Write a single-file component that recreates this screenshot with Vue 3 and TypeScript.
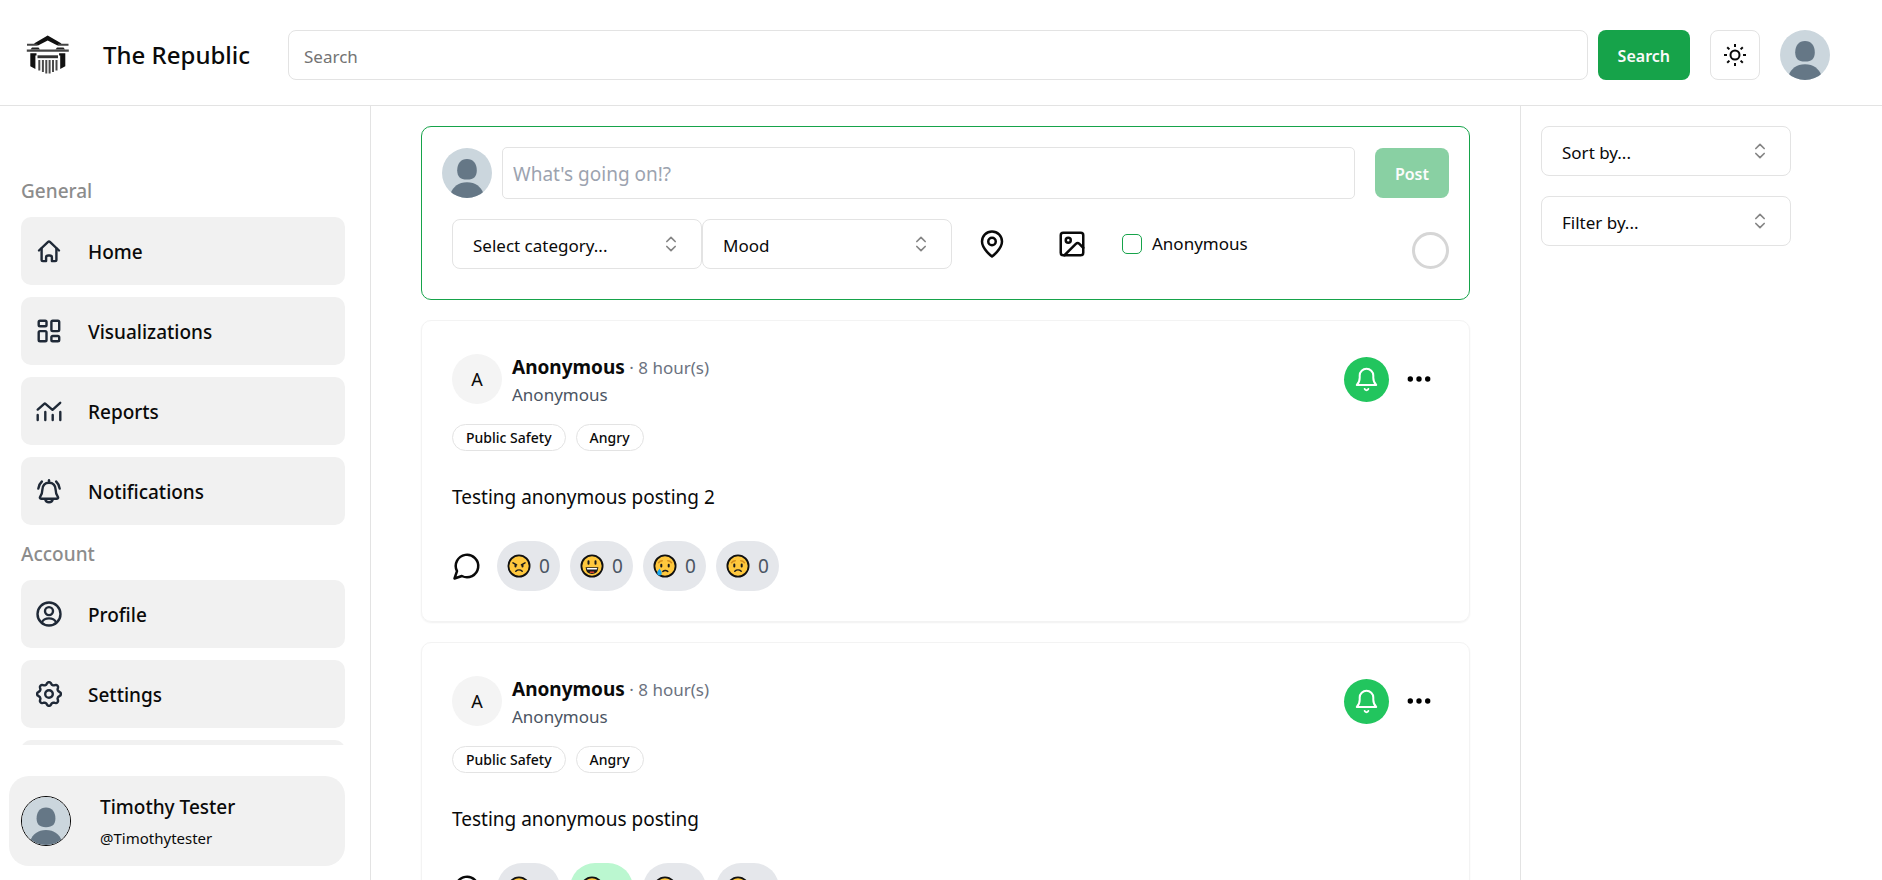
<script setup lang="ts">
import { ref, h } from 'vue'

interface NavItem {
  label: string
  icon: string[]
}

interface Reaction {
  name: string
  count: number
  active?: boolean
}

interface Post {
  id: number
  author: string
  handle: string
  age: string
  tags: string[]
  body: string
  reactions: Reaction[]
}

/** Builds the scalloped outline of the cog, centred in a 30-unit box. */
function cogOutline(): string {
  const points: string[] = []
  for (let i = 0; i < 96; i++) {
    const a = (i / 96) * Math.PI * 2
    const wave = Math.max(-0.75, Math.min(0.75, Math.cos(8 * a)))
    const r = 10.7 + wave * 1.5
    points.push(`${(15 + r * Math.sin(a)).toFixed(2)} ${(15 - r * Math.cos(a)).toFixed(2)}`)
  }
  return `M${points.join('L')}Z`
}

const general: NavItem[] = [
  {
    label: 'Home',
    icon: [
      'M5 14.5 14.1 5.9a1.3 1.3 0 0 1 1.8 0L25 14.5',
      'M7.6 12.5v11.3c0 .8.5 1.3 1.3 1.3h3.2v-3.6c0-1.2.8-2 2-2h1.8c1.2 0 2 .8 2 2v3.6h3.2c.8 0 1.3-.5 1.3-1.3V12.5',
    ],
  },
  {
    label: 'Visualizations',
    icon: [
      'M6 4.7h5.2a1.3 1.3 0 0 1 1.3 1.3v2.9a1.3 1.3 0 0 1-1.3 1.3H6a1.3 1.3 0 0 1-1.3-1.3V6A1.3 1.3 0 0 1 6 4.7z',
      'M18.7 4.7h5.2a1.3 1.3 0 0 1 1.3 1.3v7.8a1.3 1.3 0 0 1-1.3 1.3h-5.2a1.3 1.3 0 0 1-1.3-1.3V6a1.3 1.3 0 0 1 1.3-1.3z',
      'M6 15.1h5.2a1.3 1.3 0 0 1 1.3 1.3V24a1.3 1.3 0 0 1-1.3 1.3H6A1.3 1.3 0 0 1 4.7 24v-7.6A1.3 1.3 0 0 1 6 15.1z',
      'M18.7 20h5.2a1.3 1.3 0 0 1 1.3 1.3V24a1.3 1.3 0 0 1-1.3 1.3h-5.2a1.3 1.3 0 0 1-1.3-1.3v-2.7a1.3 1.3 0 0 1 1.3-1.3z',
    ],
  },
  {
    label: 'Reports',
    icon: [
      'M3.7 13.6 10.2 7.8a1 1 0 0 1 1.3 0L18.5 13.8 26.2 6.8',
      'M3.7 19v5M11.3 16v8M18.7 19v5M26.3 16v8',
    ],
  },
  {
    label: 'Notifications',
    icon: [
      'M15 4.3v2.4',
      'M15 6.7c-4.2 0-6.5 3-6.6 6.8-.1 3.7-.7 5.3-2.2 7.2-.7 1-.3 2 .9 2h15.8c1.2 0 1.6-1 .9-2-1.5-1.9-2.1-3.5-2.2-7.2-.1-3.8-2.4-6.8-6.6-6.8z',
      'M11.2 23.2c.4 2 1.8 3.1 3.8 3.1s3.4-1.1 3.8-3.1',
      'M7.9 5.5C5.9 7.3 4.7 9.6 4.3 12.6M22.1 5.5c2 1.8 3.2 4.1 3.6 7.1',
    ],
  },
]

const account: NavItem[] = [
  {
    label: 'Profile',
    icon: [
      'M3.5 15a11.5 11.5 0 1 0 23 0a11.5 11.5 0 1 0-23 0z',
      'M11 12.1a4 4 0 1 0 8 0a4 4 0 1 0-8 0z',
      'M7.8 23.4c1.4-3 3.9-4 7.2-4s5.8 1 7.2 4',
    ],
  },
  {
    label: 'Settings',
    icon: [cogOutline(), 'M11.2 15a3.8 3.8 0 1 0 7.6 0a3.8 3.8 0 1 0-7.6 0z'],
  },
  {
    label: 'Logout',
    icon: ['M12 5H7a2 2 0 0 0-2 2v16a2 2 0 0 0 2 2h5', 'M19 20l6-5-6-5M25 15H12'],
  },
]

const navGroups = [
  { title: 'General', items: general },
  { title: 'Account', items: account },
]

const makeReactions = (active?: string): Reaction[] =>
  ['angry', 'happy', 'sad', 'worried'].map((name) => ({
    name,
    count: name === active ? 1 : 0,
    active: name === active,
  }))

const posts = ref<Post[]>([
  {
    id: 2,
    author: 'Anonymous',
    handle: 'Anonymous',
    age: '8 hour(s)',
    tags: ['Public Safety', 'Angry'],
    body: 'Testing anonymous posting 2',
    reactions: makeReactions(),
  },
  {
    id: 1,
    author: 'Anonymous',
    handle: 'Anonymous',
    age: '8 hour(s)',
    tags: ['Public Safety', 'Angry'],
    body: 'Testing anonymous posting',
    reactions: makeReactions('happy'),
  },
])

const query = ref('')
const draft = ref('')
const anonymous = ref(false)

const AvatarArt = () =>
  h('svg', { viewBox: '0 0 50 50', 'aria-hidden': 'true' }, [
    h('rect', { width: 50, height: 50, fill: '#cbd6dd' }),
    h('path', {
      d: 'M25 11c6.2 0 9.8 4.8 9.8 11.2 0 6-2.6 9.3-9.8 9.3s-9.8-3.3-9.8-9.3C15.2 15.8 18.8 11 25 11z',
      fill: '#657786',
    }),
    h('path', { d: 'M25 34.3c8.5 0 13.8 4.5 16.5 11.2V50h-33v-4.5C11.2 38.8 16.5 34.3 25 34.3z', fill: '#657786' }),
  ])

const UpDown = () =>
  h(
    'svg',
    {
      viewBox: '0 0 24 24',
      fill: 'none',
      stroke: '#858585',
      'stroke-width': 2,
      'stroke-linecap': 'round',
      'stroke-linejoin': 'round',
      'aria-hidden': 'true',
    },
    [h('path', { d: 'm7 15 5 5 5-5M7 9l5-5 5 5' })],
  )
</script>

<template>
  <div class="shell">
    <header class="topbar">
      <a class="brand" href="#">
        <svg class="logo" viewBox="0 0 44 42" aria-hidden="true">
          <path d="M21.7 1.5 35.5 9.5 31.5 11.5 21.7 6.5 12 11.5 8 9.5z" fill="#111" />
          <path d="M1 9.8h10.5v2H1zM32 9.8h10.5v2H32z" fill="#444" />
          <path d="M6 13.6h6.5l1.5 2H4.5zM31 13.6h6.5l1.5 2h-9.500z" fill="#222" />
          <path d="M.8 15.6h42v2.2H.8z" fill="#444" />
          <path d="M4.3 19.3h6.2v2.2H9.4V35l-5.1-2.7zM39.3 19.3h-6.2v2.2h1.1V35l5.1-2.7z" fill="#111" />
          <path d="M11.5 21.3h20.5v2.9H11.5z" fill="#333" />
          <path d="M13.3 26v10.500M16.900 26v12M20.300 26v13.500M23.600 26v13.500M27 26v12M30.500 26v10.500" stroke="#4a4a4a" stroke-width="2" />
        </svg>
        <span class="brand-name">The Republic</span>
      </a>
      <form class="search" role="search" @submit.prevent>
        <input v-model="query" class="search-input" type="search" placeholder="Search" aria-label="Search" />
        <button class="btn-primary" type="submit">Search</button>
      </form>
      <button class="theme" type="button" aria-label="Toggle theme">
        <svg viewBox="0 0 24 24" aria-hidden="true">
          <circle cx="12" cy="12" r="4.5" />
          <path d="M12 1v3M12 20v3M4.2 4.2l2.2 2.2M17.600 17.600l2.200 2.200M1 12h3M20 12h3M6.400 17.600l-2.200 2.200M19.800 4.200l-2.200 2.200" />
        </svg>
      </button>
      <button class="avatar" type="button" aria-label="Account menu"><AvatarArt /></button>
    </header>

    <div class="columns">
      <aside class="sidebar">
        <nav class="nav">
          <section v-for="group in navGroups" :key="group.title" class="nav-group">
            <h2 class="nav-title">{{ group.title }}</h2>
            <a v-for="item in group.items" :key="item.label" class="nav-item" href="#">
              <svg class="nav-icon" viewBox="0 0 30 30" aria-hidden="true">
                <path v-for="d in item.icon" :key="d" :d="d" />
              </svg>
              <span>{{ item.label }}</span>
            </a>
          </section>
        </nav>
        <a class="user" href="#">
          <span class="avatar ringed"><AvatarArt /></span>
          <span class="user-text">
            <span class="user-name">Timothy Tester</span>
            <span class="user-handle">@Timothytester</span>
          </span>
        </a>
      </aside>

      <main class="feed">
        <form class="composer" @submit.prevent>
          <div class="composer-row">
            <span class="avatar"><AvatarArt /></span>
            <input v-model="draft" class="draft" type="text" placeholder="What's going on!?" aria-label="Post text" />
            <button class="btn-primary" type="submit" :disabled="!draft">Post</button>
          </div>
          <div class="composer-tools">
            <label class="picker">
              <select aria-label="Category"><option>Select category...</option></select>
              <UpDown class="picker-icon" />
            </label>
            <label class="picker">
              <select aria-label="Mood"><option>Mood</option></select>
              <UpDown class="picker-icon" />
            </label>
            <button class="tool" type="button" aria-label="Add location">
              <svg viewBox="0 0 24 24" aria-hidden="true">
                <path d="M20 10c0 6-8 12-8 12s-8-6-8-12a8 8 0 0 1 16 0Z" />
                <circle cx="12" cy="10" r="3" />
              </svg>
            </button>
            <button class="tool" type="button" aria-label="Add image">
              <svg viewBox="0 0 24 24" aria-hidden="true">
                <rect width="18" height="18" x="3" y="3" rx="2" />
                <circle cx="9" cy="9" r="2" />
                <path d="m21 15-3.086-3.086a2 2 0 0 0-2.828 0L6 21" />
              </svg>
            </button>
            <label class="check">
              <input v-model="anonymous" type="checkbox" />
              <span>Anonymous</span>
            </label>
            <span class="gauge" role="progressbar" aria-label="Characters used" aria-valuenow="0"></span>
          </div>
        </form>

        <article v-for="post in posts" :key="post.id" class="post">
          <div class="post-head">
            <span class="initial">A</span>
            <div class="byline">
              <div><strong class="author">{{ post.author }}</strong><span class="age"> · {{ post.age }}</span></div>
              <div class="handle">{{ post.handle }}</div>
            </div>
            <button class="follow" type="button" aria-label="Follow post">
              <svg viewBox="0 0 45 45" aria-hidden="true">
                <path d="M12.8 28h19.4c-1.9-2-2.9-3.7-2.9-7.2v-2.3a6.8 6.8 0 0 0-13.6 0v2.3c0 3.5-1 5.2-2.9 7.2z" />
                <path d="M20.7 32a1.9 1.7 0 0 0 3.6 0" />
              </svg>
            </button>
            <button class="more" type="button" aria-label="More options">
              <svg viewBox="0 0 30 30" aria-hidden="true">
                <circle cx="6.3" cy="15" r="2.7" /><circle cx="15" cy="15" r="2.7" /><circle cx="23.7" cy="15" r="2.7" />
              </svg>
            </button>
          </div>
          <div class="tags">
            <span v-for="tag in post.tags" :key="tag" class="tag">{{ tag }}</span>
          </div>
          <p class="body">{{ post.body }}</p>
          <div class="reactions">
            <button class="comment" type="button" aria-label="Comment">
              <svg viewBox="0 0 24 24" aria-hidden="true"><path d="M7.9 20A9 9 0 1 0 4 16.1L2 22Z" /></svg>
            </button>
            <button
              v-for="r in post.reactions"
              :key="r.name"
              class="reaction"
              :class="{ active: r.active }"
              type="button"
              :aria-label="r.name"
            >
              <svg class="face" viewBox="0 0 24 24" aria-hidden="true">
                <circle cx="12" cy="12" r="10.6" fill="#ffc83d" stroke="#111" stroke-width="1.8" />
                <g v-if="r.name === 'angry'" class="ink">
                  <path d="M6 8.8l3.6 2M18 8.8l-3.6 2M8.8 17.3c1.8-1.7 4.6-1.7 6.4 0" />
                  <path d="M8.5 11.2v1.2M15.5 11.2v1.2" class="eye" />
                </g>
                <g v-else-if="r.name === 'happy'" class="ink">
                  <path d="M8.5 7.2v2.5M15.5 7.2v2.5" class="eye" />
                  <path d="M6.5 14h11c-.3 3.2-2.5 5.2-5.5 5.2s-5.200-2-5.500-5.200z" fill="#1a1a1a" />
                  <path d="M7.5 14.8h9" class="teeth" />
                  <path d="M10.4 18.2h3.2" class="tongue" />
                </g>
                <g v-else-if="r.name === 'sad'" class="ink">
                  <path d="M5.5 8.7c1-1.3 2.2-2 3.7-2M18.5 8.7c-1-1.3-2.2-2-3.7-2" class="brow" />
                  <path d="M8.3 10.8v1.6M15.7 10.8v1.6" class="eye" />
                  <path d="M9.8 17.5c1.4-1.5 3.6-1.5 5 0" />
                  <path d="M6.5 14.5c1.5 2 2.3 3.4 2.3 4.7a2.3 2.3 0 0 1-4.6 0c0-1.3.8-2.7 2.3-4.7z" class="tear" />
                </g>
                <g v-else class="ink">
                  <path d="M5.5 8.7c1-1.3 2.2-2 3.7-2M18.5 8.7c-1-1.3-2.2-2-3.7-2" class="brow" />
                  <path d="M8.3 10.5v1.9M15.7 10.5v1.9" class="eye" />
                  <path d="M8.8 17.3c1.8-1.7 4.6-1.7 6.4 0" />
                </g>
              </svg>
              <span>{{ r.count }}</span>
            </button>
          </div>
        </article>
      </main>

      <aside class="filters">
        <label class="picker">
          <select aria-label="Sort posts"><option>Sort by...</option></select>
          <UpDown class="picker-icon" />
        </label>
        <label class="picker">
          <select aria-label="Filter posts"><option>Filter by...</option></select>
          <UpDown class="picker-icon" />
        </label>
      </aside>
    </div>
  </div>
</template>

<style>
body {
  margin: 0;
  background: #fff;
}
</style>

<style scoped>
.shell {
  display: flex;
  flex-direction: column;
  height: 100vh;
  color: #0a0a0a;
  font-family: 'Noto Sans', 'Open Sans', sans-serif;
  font-size: 18px;
  line-height: 28px;
  font-weight: 380;
}
.shell *,
.shell *::before {
  box-sizing: border-box;
}
button,
input,
select {
  margin: 0;
  padding: 0;
  font: inherit;
  color: inherit;
}
button {
  border: 0;
  background: none;
  cursor: pointer;
}
a {
  color: inherit;
  text-decoration: none;
}
svg {
  display: block;
}

/* Header */
.topbar {
  display: flex;
  flex: none;
  align-items: center;
  height: 106px;
  padding: 20px 52px 15px 26px;
  border-bottom: 1px solid #e3e3e3;
}
.brand {
  display: flex;
  align-items: center;
  gap: 33px;
  width: 262px;
}
.logo {
  width: 44px;
  height: 42px;
}
.brand-name {
  font-size: 24px;
  line-height: 32px;
  font-weight: 480;
  white-space: nowrap;
}
.search {
  display: flex;
  flex: 1;
  gap: 10px;
}
.search-input {
  flex: 1;
  min-width: 0;
  height: 50px;
  padding: 2px 15px 0;
  border: 1px solid #e3e3e3;
  border-radius: 8px;
  background: #fff;
  font-size: 17px;
  outline: none;
  appearance: none;
}
.search-input::placeholder {
  color: #737373;
  opacity: 1;
}
.btn-primary {
  height: 50px;
  padding: 2px 20px 0;
  border-radius: 8px;
  background: #16a34a;
  color: #fafafa;
  font-size: 16px;
  font-weight: 600;
}
.btn-primary:disabled {
  opacity: 0.5;
}
.theme {
  display: grid;
  place-items: center;
  width: 50px;
  height: 50px;
  margin: 0 20px;
  border: 1px solid #e3e3e3;
  border-radius: 8px;
}
.theme svg {
  width: 24px;
  height: 24px;
  fill: none;
  stroke: #0a0a0a;
  stroke-width: 2;
}
.avatar {
  flex: none;
  width: 50px;
  height: 50px;
  border-radius: 50%;
  overflow: hidden;
}
.ringed {
  border: 1px solid #000;
}

/* Columns */
.columns {
  display: grid;
  flex: 1;
  grid-template-columns: 371px minmax(0, 1fr) 362px;
  min-height: 0;
}

/* Sidebar */
.sidebar {
  display: flex;
  flex-direction: column;
  min-height: 0;
  padding: 69px 25px 14px 9px;
  border-right: 1px solid #e3e3e3;
}
.nav {
  display: flex;
  flex: 1;
  flex-direction: column;
  gap: 1px;
  min-height: 0;
  margin-bottom: 31px;
  padding-left: 12px;
  overflow-y: auto;
  scrollbar-width: none;
}
.nav-title {
  margin: 0;
  padding: 0 0 10px;
  color: #8c8c8c;
  font-size: 19px;
  line-height: 32px;
  font-weight: 550;
}
.nav-item {
  display: flex;
  align-items: center;
  gap: 24px;
  height: 68px;
  margin-bottom: 12px;
  padding: 0 13px;
  border-radius: 10px;
  background: #f1f1f1;
  font-size: 19px;
  font-weight: 480;
}
.nav-item span {
  padding-top: 2px;
}
.nav-icon {
  width: 30px;
  height: 30px;
  fill: none;
  stroke: #1f2937;
  stroke-width: 2.4;
  stroke-linecap: round;
  stroke-linejoin: round;
}
.user {
  display: flex;
  align-items: center;
  gap: 29px;
  height: 90px;
  padding: 0 12px;
  border-radius: 20px;
  background: #f1f1f1;
}
.user-text {
  display: flex;
  flex-direction: column;
  gap: 3px;
  padding-top: 2px;
}
.user-name {
  font-size: 19px;
  font-weight: 480;
}
.user-handle {
  font-size: 15px;
  font-weight: 420;
}

/* Feed */
.feed {
  display: flex;
  flex-direction: column;
  gap: 20px;
  min-height: 0;
  padding: 20px 50px;
  overflow-y: auto;
  scrollbar-width: none;
}
.composer {
  flex: none;
  padding: 20px 20px 30px;
  border: 1px solid #16a34a;
  border-radius: 10px;
}
.composer-row {
  display: flex;
  align-items: center;
}
.draft {
  flex: 1;
  min-width: 0;
  height: 52px;
  margin: 0 20px 0 10px;
  padding: 2px 10px 0;
  border: 1px solid #e3e3e3;
  border-radius: 5px;
  font-size: 19px;
  outline: none;
}
.draft::placeholder {
  color: #9ca3af;
  font-weight: 420;
  opacity: 1;
}
.composer-tools {
  display: flex;
  align-items: center;
  margin: 20px 0 0 10px;
}
.picker {
  display: grid;
  width: 250px;
}
.picker > * {
  grid-area: 1 / 1;
}
.picker select {
  width: 100%;
  height: 50px;
  padding: 3px 20px 0;
  border: 1px solid #e3e3e3;
  border-radius: 8px;
  background: #fff;
  font-size: 17px;
  font-weight: 420;
  appearance: none;
}
.picker-icon {
  place-self: center end;
  width: 20px;
  height: 20px;
  margin-right: 21px;
  pointer-events: none;
}
.tool {
  display: grid;
  place-items: center;
  width: 80px;
  height: 50px;
}
.tool svg,
.comment svg {
  width: 30px;
  height: 30px;
  fill: none;
  stroke: #0a0a0a;
  stroke-width: 2;
  stroke-linecap: round;
  stroke-linejoin: round;
}
.check {
  display: flex;
  align-items: center;
  gap: 10px;
  margin-left: 10px;
  font-size: 17px;
  font-weight: 420;
}
.check input {
  width: 20px;
  height: 20px;
  border: 1px solid #16a34a;
  border-radius: 5px;
  appearance: none;
}
.check input:checked {
  background: #16a34a;
}
.gauge {
  align-self: flex-end;
  width: 37px;
  height: 37px;
  margin-left: auto;
  border: 3px solid #d6d6d6;
  border-radius: 50%;
}

/* Posts */
.post {
  flex: none;
  padding: 33px 30px 30px;
  border: 1px solid #f3f3f3;
  border-radius: 10px;
  box-shadow: 0 1px 2px rgba(0, 0, 0, 0.06);
}
.post-head {
  display: flex;
  align-items: center;
  height: 50px;
}
.initial {
  display: grid;
  flex: none;
  place-items: center;
  width: 50px;
  height: 50px;
  border-radius: 50%;
  background: #f4f4f4;
}
.byline {
  flex: 1;
  align-self: flex-start;
  margin-left: 10px;
  line-height: 27px;
}
.author {
  font-size: 19px;
  font-weight: 700;
}
.age {
  color: #6b7280;
  font-size: 17px;
}
.handle {
  color: #4b5563;
  font-size: 17px;
}
.follow {
  width: 45px;
  height: 45px;
  margin-right: 15px;
  border-radius: 50%;
  background: #22c55e;
}
.follow svg {
  fill: none;
  stroke: #fff;
  stroke-width: 2;
  stroke-linecap: round;
  stroke-linejoin: round;
}
.more {
  width: 30px;
  height: 30px;
  margin-right: 5px;
}
.tags {
  display: flex;
  gap: 10px;
  margin-top: 20px;
}
.tag {
  height: 27px;
  padding: 0 13px;
  border: 1px solid #e3e3e3;
  border-radius: 14px;
  font-size: 14px;
  line-height: 26px;
  font-weight: 500;
}
.body {
  margin: 32px 0 29px;
  font-size: 19px;
  line-height: 29px;
}
.reactions {
  display: flex;
  align-items: center;
  gap: 10px;
}
.comment {
  margin-right: 5px;
}
.reaction {
  display: flex;
  align-items: center;
  justify-content: center;
  gap: 8px;
  width: 63px;
  height: 50px;
  border-radius: 25px;
  background: #e5e7eb;
  color: #4b5563;
  font-size: 19px;
}
.reaction.active {
  background: #bbf7d0;
}
.face {
  width: 24px;
  height: 24px;
}
.ink {
  fill: none;
  stroke: #1a1a1a;
  stroke-width: 1.5;
  stroke-linecap: round;
}
.eye {
  stroke-width: 2;
}
.brow {
  stroke: #d68f1e;
}
.teeth {
  stroke: #fff;
  stroke-width: 1.5;
}
.tongue {
  stroke: #e0452f;
}
.tear {
  fill: #19a7f0;
  stroke: none;
}

/* Filters */
.filters {
  display: flex;
  flex-direction: column;
  gap: 20px;
  padding: 20px;
  border-left: 1px solid #e3e3e3;
}
</style>
